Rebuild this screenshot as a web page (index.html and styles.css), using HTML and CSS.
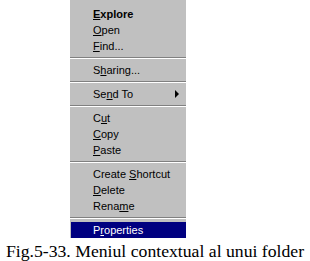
FILE: index.html
```html
<!DOCTYPE html>
<html lang="ro">
<head>
    <meta charset="UTF-8">
    <title>Meniul contextual</title>
    <link rel="stylesheet" href="styles.css">
</head>
<body>

<div class="figure">
    <ul class="menu">
        <li class="item bold"><u>E</u>xplore</li>
        <li class="item"><u>O</u>pen</li>
        <li class="item"><u>F</u>ind...</li>
        <li class="sep"></li>
        <li class="item">S<u>h</u>aring...</li>
        <li class="sep"></li>
        <li class="item">Se<u>n</u>d To <span class="arrow"></span></li>
        <li class="sep"></li>
        <li class="item">C<u>u</u>t</li>
        <li class="item"><u>C</u>opy</li>
        <li class="item"><u>P</u>aste</li>
        <li class="sep"></li>
        <li class="item">Create <u>S</u>hortcut</li>
        <li class="item"><u>D</u>elete</li>
        <li class="item">Rena<u>m</u>e</li>
        <li class="sep"></li>
        <li class="item selected">P<u>r</u>operties</li>
    </ul>
    <p class="caption">Fig.5-33. Meniul contextual al unui folder</p>
</div>

</body>
</html>
```

FILE: styles.css
```css
/* Page */
body { margin: 0; background: #fff; }
.figure { width: 310px; height: 261px; overflow: hidden; }

/* Context menu */
.menu { list-style: none; margin: 0 0 0 70px; padding: 6px 0 0 0; width: 116px; background: #c0c0c0; font-family: "Liberation Sans", Arial, sans-serif; font-size: 11px; color: #000; }
.item { position: relative; height: 16px; line-height: 16px; padding-left: 23px; }
.item u { text-decoration: underline; text-underline-offset: 1px; }
.bold { font-weight: bold; }
.selected { background: #000080; color: #fff; margin-left: 1px; padding-left: 22px; }
.sep { height: 8px; display: flex; flex-direction: column; justify-content: center; }
.sep::before { content: ""; display: block; height: 1px; background: #808080; }
.sep::after { content: ""; display: block; height: 1px; background: #fff; }

/* Submenu arrow */
.arrow { position: absolute; right: 7px; top: 4px; width: 0; height: 0; border-top: 4px solid transparent; border-bottom: 4px solid transparent; border-left: 4px solid #000; }

/* Caption */
.caption { margin: 3px 0 0 0; text-align: center; font-family: "Liberation Serif", "Times New Roman", serif; font-size: 17.7px; line-height: 20px; color: #000; }
```
